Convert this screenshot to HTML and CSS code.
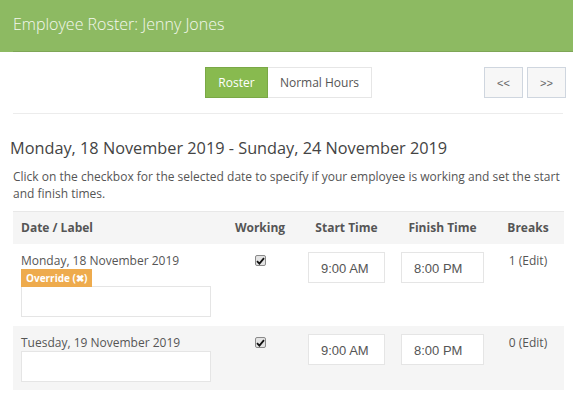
FILE: index.html
```html
<!DOCTYPE html>
<html lang="en">
<head>
    <meta charset="UTF-8">
    <meta name="viewport" content="width=device-width, initial-scale=1.0">
    <title>Employee Roster</title>
    <link rel="stylesheet" href="styles.css">
</head>
<body>
    <div class="header">
        <h1>Employee Roster: Jenny Jones</h1>
    </div>

    <div class="page">
        <div class="toolbar">
            <div class="tabs">
                <button class="tab active">Roster</button>
                <button class="tab">Normal Hours</button>
            </div>
            <div class="pager">
                <button class="page-btn">&lt;&lt;</button>
                <button class="page-btn">&gt;&gt;</button>
            </div>
        </div>
        <hr class="divider">

        <h3 class="week">Monday, 18 November 2019 - Sunday, 24 November 2019</h3>
        <p class="hint">Click on the checkbox for the selected date to specify if your employee is working and set the start and finish times.</p>

        <table class="roster">
            <colgroup>
                <col class="c-date">
                <col class="c-work">
                <col class="c-start">
                <col class="c-finish">
                <col class="c-breaks">
            </colgroup>
            <thead>
                <tr>
                    <th class="left">Date / Label</th>
                    <th>Working</th>
                    <th>Start Time</th>
                    <th>Finish Time</th>
                    <th>Breaks</th>
                </tr>
            </thead>
            <tbody>
                <tr>
                    <td class="left">
                        <div class="day">Monday, 18 November 2019</div>
                        <span class="badge">Override (&#10006;)</span>
                        <input type="text" class="label-input">
                    </td>
                    <td><span class="check"><svg width="9" height="8" viewBox="0 0 9 8"><path d="M1 4.2 L3.4 6.6 L8 1.2" fill="none" stroke="#111" stroke-width="1.8"/></svg></span></td>
                    <td><input type="text" class="time start" value="9:00 AM"></td>
                    <td><input type="text" class="time finish" value="8:00 PM"></td>
                    <td class="breaks">1 (Edit)</td>
                </tr>
                <tr class="alt">
                    <td class="left">
                        <div class="day">Tuesday, 19 November 2019</div>
                        <input type="text" class="label-input">
                    </td>
                    <td><span class="check"><svg width="9" height="8" viewBox="0 0 9 8"><path d="M1 4.2 L3.4 6.6 L8 1.2" fill="none" stroke="#111" stroke-width="1.8"/></svg></span></td>
                    <td><input type="text" class="time start" value="9:00 AM"></td>
                    <td><input type="text" class="time finish" value="8:00 PM"></td>
                    <td class="breaks">0 (Edit)</td>
                </tr>
            </tbody>
        </table>
    </div>
</body>
</html>
```

FILE: styles.css
```css
* {
    margin: 0;
    padding: 0;
    box-sizing: border-box;
}

body {
    font-family: "Open Sans", sans-serif;
    color: #555;
    background: #fff;
}

.header {
    background: #8dba62;
    padding-left: 13px;
}

.header h1 {
    font-size: 16px;
    font-weight: 300;
    color: #f4f8ee;
    height: 52px;
    line-height: 48px;
    border-bottom: 1px solid #7ea656;
}

.page {
    padding: 0 9px 0 10px;
}

.toolbar {
    display: grid;
    grid-template-columns: 1fr auto 1fr;
    align-items: center;
    margin: 15px 0 0 3px;
}

.tabs {
    grid-column: 2;
    display: flex;
}

.pager {
    grid-column: 3;
    justify-self: end;
    display: flex;
    gap: 4px;
    margin-right: -2px;
}

button {
    font-family: "Open Sans", sans-serif;
    cursor: pointer;
    white-space: nowrap;
}

.tab {
    height: 31px;
    padding: 0;
    font-size: 12px;
    color: #555;
    background: #fff;
    border: 1px solid #e6e6e6;
}

.tab.active {
    background: #88ba4f;
    border-color: #7aa846;
    color: #fff;
    width: 63px;
}

.tab + .tab {
    border-left: none;
    width: 104px;
}

.page-btn {
    width: 39px;
    height: 31px;
    background: #f7f7f7;
    border: 1px solid #cfd6df;
    font-family: "Liberation Sans", sans-serif;
    font-size: 11px;
    color: #666;
}

.divider {
    border: none;
    border-top: 1px solid #ececec;
    margin: 15px 1px 0 3px;
}

.week {
    font-size: 16.3px;
    font-weight: 400;
    color: #444;
    margin-top: 22px;
    line-height: 24px;
}

.hint {
    font-size: 12px;
    line-height: 17px;
    color: #555;
    margin: 8px 0 0 3px;
}

.roster {
    width: 551px;
    margin: 9px 0 0 3px;
    table-layout: fixed;
    border-collapse: collapse;
    border-top: 1px solid #e8e8e8;
}

.c-date { width: 207px; }
.c-work { width: 80px; }
.c-start { width: 93px; }
.c-finish { width: 99px; }
.c-breaks { width: 72px; }

.roster th {
    background: #f5f5f5;
    font-size: 12px;
    font-weight: 700;
    color: #555;
    height: 32px;
    text-align: center;
    padding: 0 8px;
}

.roster td {
    text-align: center;
    vertical-align: top;
    padding: 8px 8px 9px;
    font-size: 12px;
}

.roster .left {
    text-align: left;
}

.roster tr.alt td {
    background: #f5f5f5;
    padding-bottom: 8px;
}

.day {
    line-height: 16px;
    margin-top: 1px;
}

.badge {
    display: inline-block;
    background: #eeab4d;
    color: #fff;
    font-size: 10px;
    font-weight: 700;
    line-height: 18px;
    padding: 0 5px;
    vertical-align: top;
}

.label-input {
    display: block;
    width: 190px;
    height: 31px;
    margin-top: -1px;
    border: 1px solid #e5e5e5;
    background: #fff;
}

.alt .label-input {
    margin-top: 0;
}

.check {
    display: inline-flex;
    align-items: center;
    justify-content: center;
    width: 11px;
    height: 11px;
    margin-top: 3px;
    background: #e4e4e4;
    border: 1px solid #8a8a8a;
    border-radius: 2px;
}

.time {
    height: 31px;
    border: 1px solid #e5e5e5;
    background: #fff;
    font-family: "Liberation Sans", sans-serif;
    font-size: 13px;
    color: #555;
    padding: 2px 0 0 12px;
}

.time.start { width: 77px; }
.time.finish { width: 83px; }

.breaks {
    padding-top: 9px;
}
```
